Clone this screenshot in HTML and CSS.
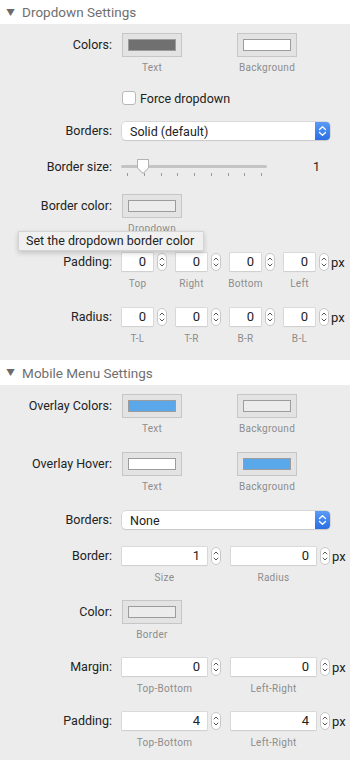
FILE: index.html
```html
<!DOCTYPE html>
<html lang="en">

<head>
    <meta charset="UTF-8">
    <meta name="viewport" content="width=device-width, initial-scale=1.0">
    <title>Menu Settings</title>
    <link rel="stylesheet" href="styles.css">
</head>

<body>
    <!-- Dropdown settings -->
    <div class="section">
        <div class="section-head"><span class="caret">▼</span>Dropdown Settings</div>
        <div class="section-body">
            <div class="row first">
                <div class="label label-well">Colors:</div>
                <div class="wells">
                    <div class="well-item">
                        <div class="well"><span class="swatch swatch-gray"></span></div>
                        <div class="caption">Text</div>
                    </div>
                    <div class="well-item">
                        <div class="well"><span class="swatch swatch-white"></span></div>
                        <div class="caption">Background</div>
                    </div>
                </div>
            </div>

            <div class="row">
                <div class="label"></div>
                <label class="check"><span class="checkbox"></span>Force dropdown</label>
            </div>

            <div class="row">
                <div class="label label-input">Borders:</div>
                <div class="select">
                    <span>Solid (default)</span>
                    <span class="select-arrows">
                        <svg width="15" height="18" viewBox="0 0 15 18"><path d="M4.5 7.5 L7.5 4.8 L10.5 7.5 M4.5 10.5 L7.5 13.2 L10.5 10.5" fill="none" stroke="#fff" stroke-width="1.3" stroke-linecap="round" stroke-linejoin="round"/></svg>
                    </span>
                </div>
            </div>

            <div class="row">
                <div class="label label-slider">Border size:</div>
                <div class="slider-wrap">
                    <div class="slider">
                        <div class="track"></div>
                        <svg class="thumb" width="14" height="17" viewBox="0 0 14 17"><path d="M1.5 1.5 H12.5 V10 L7 15.3 L1.5 10 Z" fill="#fff" stroke="#b3b3b3" stroke-width="1" stroke-linejoin="round"/></svg>
                        <div class="ticks">
                            <i></i><i></i><i></i><i></i><i></i><i></i><i></i><i></i><i></i>
                        </div>
                    </div>
                    <div class="slider-value">1</div>
                </div>
            </div>

            <div class="row has-tip">
                <div class="label label-well">Border color:</div>
                <div class="wells">
                    <div class="well-item">
                        <div class="well"><span class="swatch swatch-light"></span></div>
                        <div class="caption">Dropdown</div>
                    </div>
                </div>
                <div class="tooltip">Set the dropdown border color</div>
            </div>

            <div class="row loose">
                <div class="label label-input">Padding:</div>
                <div class="fields">
                    <div class="field"><div class="field-line"><div class="input small">0</div><span class="stepper"></span></div><div class="caption">Top</div></div>
                    <div class="field"><div class="field-line"><div class="input small">0</div><span class="stepper"></span></div><div class="caption">Right</div></div>
                    <div class="field"><div class="field-line"><div class="input small">0</div><span class="stepper"></span></div><div class="caption">Bottom</div></div>
                    <div class="field"><div class="field-line"><div class="input small">0</div><span class="stepper"></span><span class="unit">px</span></div><div class="caption">Left</div></div>
                </div>
            </div>

            <div class="row loose">
                <div class="label label-input">Radius:</div>
                <div class="fields">
                    <div class="field"><div class="field-line"><div class="input small">0</div><span class="stepper"></span></div><div class="caption">T-L</div></div>
                    <div class="field"><div class="field-line"><div class="input small">0</div><span class="stepper"></span></div><div class="caption">T-R</div></div>
                    <div class="field"><div class="field-line"><div class="input small">0</div><span class="stepper"></span></div><div class="caption">B-R</div></div>
                    <div class="field"><div class="field-line"><div class="input small">0</div><span class="stepper"></span><span class="unit">px</span></div><div class="caption">B-L</div></div>
                </div>
            </div>
        </div>
    </div>

    <!-- Mobile menu settings -->
    <div class="section">
        <div class="section-head tall"><span class="caret">▼</span>Mobile Menu Settings</div>
        <div class="section-body">
            <div class="row first">
                <div class="label label-well">Overlay Colors:</div>
                <div class="wells">
                    <div class="well-item">
                        <div class="well"><span class="swatch swatch-blue"></span></div>
                        <div class="caption">Text</div>
                    </div>
                    <div class="well-item">
                        <div class="well"><span class="swatch swatch-light"></span></div>
                        <div class="caption">Background</div>
                    </div>
                </div>
            </div>

            <div class="row">
                <div class="label label-well">Overlay Hover:</div>
                <div class="wells">
                    <div class="well-item">
                        <div class="well"><span class="swatch swatch-white"></span></div>
                        <div class="caption">Text</div>
                    </div>
                    <div class="well-item">
                        <div class="well"><span class="swatch swatch-blue"></span></div>
                        <div class="caption">Background</div>
                    </div>
                </div>
            </div>

            <div class="row loose">
                <div class="label label-input">Borders:</div>
                <div class="select">
                    <span>None</span>
                    <span class="select-arrows">
                        <svg width="15" height="18" viewBox="0 0 15 18"><path d="M4.5 7.5 L7.5 4.8 L10.5 7.5 M4.5 10.5 L7.5 13.2 L10.5 10.5" fill="none" stroke="#fff" stroke-width="1.3" stroke-linecap="round" stroke-linejoin="round"/></svg>
                    </span>
                </div>
            </div>

            <div class="row loose">
                <div class="label label-input">Border:</div>
                <div class="fields fields-wide">
                    <div class="field"><div class="field-line"><div class="input wide">1</div><span class="stepper"></span></div><div class="caption">Size</div></div>
                    <div class="field"><div class="field-line"><div class="input wide">0</div><span class="stepper"></span><span class="unit">px</span></div><div class="caption">Radius</div></div>
                </div>
            </div>

            <div class="row tight">
                <div class="label label-well">Color:</div>
                <div class="wells">
                    <div class="well-item">
                        <div class="well"><span class="swatch swatch-light"></span></div>
                        <div class="caption">Border</div>
                    </div>
                </div>
            </div>

            <div class="row">
                <div class="label label-input">Margin:</div>
                <div class="fields fields-wide">
                    <div class="field"><div class="field-line"><div class="input wide">0</div><span class="stepper"></span></div><div class="caption">Top-Bottom</div></div>
                    <div class="field"><div class="field-line"><div class="input wide">0</div><span class="stepper"></span><span class="unit">px</span></div><div class="caption">Left-Right</div></div>
                </div>
            </div>

            <div class="row">
                <div class="label label-input">Padding:</div>
                <div class="fields fields-wide">
                    <div class="field"><div class="field-line"><div class="input wide">4</div><span class="stepper"></span></div><div class="caption">Top-Bottom</div></div>
                    <div class="field"><div class="field-line"><div class="input wide">4</div><span class="stepper"></span><span class="unit">px</span></div><div class="caption">Left-Right</div></div>
                </div>
            </div>
        </div>
    </div>
</body>

</html>
```

FILE: styles.css
```css
/* General Page Styles */
body {
    font-family: 'Roboto', 'Inter', sans-serif;
    font-size: 12.5px;
    background-color: #ececec;
    color: #222;
    margin: 0;
    padding: 0;
}

/* Section header */
.section-head {
    display: flex;
    align-items: center;
    height: 24px;
    padding-left: 6px;
    background-color: #fff;
    color: #6f6f6f;
    font-size: 13.5px;
}

.section-head.tall {
    height: 25px;
}

.caret {
    font-size: 9px;
    margin-right: 7px;
    color: #6a6a6a;
}

.section-body {
    padding: 9px 0 15px;
}

/* Rows */
.row {
    display: flex;
    align-items: flex-start;
    margin-top: 17px;
}

.row.first {
    margin-top: 0;
}

.row.tight {
    margin-top: 16px;
}

.row.loose {
    margin-top: 18px;
}

.has-tip {
    position: relative;
}

.label {
    flex: 0 0 112px;
    margin-right: 10px;
    text-align: right;
    white-space: nowrap;
}

.label-well {
    line-height: 24px;
}

.label-input {
    line-height: 18px;
}

.label-slider {
    line-height: 20px;
}

.caption {
    display: flex;
    justify-content: center;
    margin-top: 5px;
    height: 12px;
    line-height: 12px;
    font-size: 10px;
    letter-spacing: 0.3px;
    color: #8c8c8c;
    white-space: nowrap;
}

/* Colour wells */
.wells {
    display: flex;
    gap: 55px;
}

.well {
    box-sizing: border-box;
    width: 60px;
    height: 24px;
    padding: 5px;
    background-color: #e3e3e3;
    border: 1px solid #c6c6c6;
}

.swatch {
    display: block;
    box-sizing: border-box;
    height: 100%;
    border: 1px solid #9c9c9c;
}

.swatch-gray {
    background-color: #707070;
}

.swatch-white {
    background-color: #fff;
}

.swatch-light {
    background-color: #ececec;
}

.swatch-blue {
    background-color: #5aa7ea;
}

/* Checkbox */
.check {
    display: flex;
    align-items: center;
    height: 14px;
    gap: 4px;
}

.checkbox {
    box-sizing: border-box;
    width: 14px;
    height: 14px;
    background-color: #fff;
    border: 1px solid #b8b8b8;
    border-radius: 3px;
}

/* Select */
.select {
    box-sizing: border-box;
    display: flex;
    align-items: center;
    justify-content: space-between;
    width: 208px;
    height: 18px;
    padding-left: 8px;
    background-color: #fff;
    border-radius: 4px;
    box-shadow: 0 0 0 0.5px #c4c4c4, 0 1px 1px rgba(0, 0, 0, 0.12);
}

.select-arrows {
    display: block;
    width: 15px;
    height: 18px;
    border-radius: 0 4px 4px 0;
    background: linear-gradient(#5a9bf6, #2a6fe3);
}

.select-arrows svg {
    display: block;
}

/* Slider */
.slider-wrap {
    display: flex;
    width: 208px;
    height: 20px;
}

.slider {
    position: relative;
    width: 146px;
    margin-left: -1px;
}

.track {
    margin-top: 8px;
    height: 3px;
    border-radius: 2px;
    background-color: #c4c4c4;
}

.thumb {
    position: absolute;
    left: 15px;
    top: 1px;
    filter: drop-shadow(0 0.5px 0.5px rgba(0, 0, 0, 0.2));
}

.ticks {
    display: flex;
    justify-content: space-between;
    margin: 5px 5px 0 6px;
}

.ticks i {
    display: block;
    width: 1px;
    height: 3px;
    background-color: #9a9a9a;
}

.slider-value {
    margin-left: auto;
    margin-right: 10px;
    line-height: 20px;
}

/* Number fields */
.fields {
    display: flex;
    gap: 9px;
}

.fields-wide {
    gap: 10px;
}

.field-line {
    display: flex;
    align-items: center;
}

.field .caption {
    width: 31px;
    margin-top: 7px;
}

.fields-wide .field .caption {
    width: 85px;
}

.input {
    box-sizing: border-box;
    height: 18px;
    line-height: 18px;
    padding-right: 7px;
    text-align: right;
    font-size: 13px;
    background-color: #fff;
    box-shadow: 0 0 0 0.5px #c8c8c8, 0 1px 1px rgba(0, 0, 0, 0.08);
}

.input.small {
    width: 31px;
}

.input.wide {
    width: 85px;
}

.stepper {
    box-sizing: border-box;
    width: 10px;
    height: 18px;
    margin-left: 4px;
    border: 1px solid #c8c8c8;
    border-radius: 5px;
    background: #fff url("data:image/svg+xml,%3Csvg xmlns='http://www.w3.org/2000/svg' width='8' height='16' viewBox='0 0 8 16'%3E%3Cpath d='M2 6 L4 4 L6 6 M2 10 L4 12 L6 10' fill='none' stroke='%23555' stroke-width='1' stroke-linecap='round'/%3E%3C/svg%3E") no-repeat center;
}

.unit {
    margin-left: 2px;
    width: 0;
    font-size: 13px;
    white-space: nowrap;
}

/* Tooltip */
.tooltip {
    position: absolute;
    left: 18px;
    top: 37px;
    box-sizing: border-box;
    width: 186px;
    height: 20px;
    line-height: 18px;
    padding-left: 7px;
    background-color: #f0f0f0;
    border: 1px solid #d4d4d4;
    box-shadow: 0 2px 5px rgba(0, 0, 0, 0.18);
    white-space: nowrap;
}
```
